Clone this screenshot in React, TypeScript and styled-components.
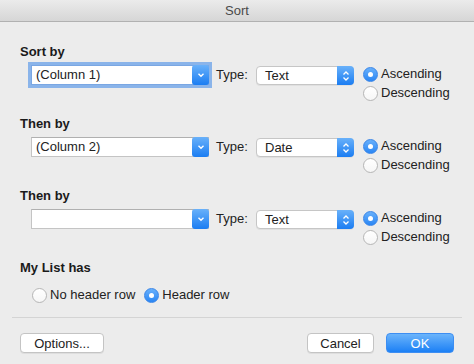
import React from 'react';
import styled, { createGlobalStyle, css } from 'styled-components';

const GlobalStyle = createGlobalStyle`
  html, body {
    margin: 0;
    padding: 0;
    background: #ececec;
  }
  body {
    font-family: 'Liberation Sans', Arial, sans-serif;
    font-size: 13px;
    color: #222;
  }
`;

const Window = styled.div`
  width: 474px;
  height: 364px;
  display: flex;
  flex-direction: column;
  background: #ececec;
  overflow: hidden;
`;

const TitleBar = styled.div`
  height: 21px;
  flex-shrink: 0;
  display: flex;
  align-items: center;
  justify-content: center;
  background: linear-gradient(#ebebeb, #d6d6d6);
  border-bottom: 1px solid #b1b1b1;
  color: #4a4a4a;
  font-size: 13px;
`;

const Body = styled.div`
  display: flex;
  flex-direction: column;
  padding: 22px 0 0 20px;
`;

const Section = styled.div<{ $gap?: number; $after?: number }>`
  display: flex;
  flex-direction: column;
  gap: ${(p) => p.$gap ?? 5}px;
  margin-bottom: ${(p) => p.$after ?? 15}px;
`;

const Heading = styled.div`
  font-weight: bold;
  line-height: 16px;
  height: 16px;
  color: #1a1a1a;
`;

const Row = styled.div`
  display: flex;
  align-items: flex-start;
  padding-left: 11px;
`;

const Combo = styled.div<{ $focused?: boolean }>`
  width: 178px;
  height: 20px;
  display: flex;
  box-sizing: border-box;
  background: #fff;
  border: 1px solid #c4c4c4;
  border-top-color: #b0b0b0;
  ${(p) =>
    p.$focused &&
    css`
      box-shadow: 0 0 0 3px #8ab4ea;
      border-color: #7aa7e3;
    `}
`;

const ComboText = styled.div`
  flex: 1;
  line-height: 18px;
  padding-left: 4px;
`;

const BlueKnob = styled.div<{ $round?: boolean }>`
  width: 17px;
  margin: -1px -1px -1px 0;
  display: flex;
  align-items: center;
  justify-content: center;
  background: linear-gradient(#69b1fa, #1b7df2);
  border-radius: ${(p) => (p.$round ? '0 4px 4px 0' : '3px')};
`;

const TypeLabel = styled.div`
  width: 40px;
  margin-left: 7px;
  line-height: 20px;
`;

const Popup = styled.div`
  width: 98px;
  height: 19px;
  margin-top: 1px;
  box-sizing: border-box;
  display: flex;
  background: #fff;
  border: 1px solid #c6c6c6;
  border-radius: 4px;
  box-shadow: 0 1px 0 rgba(0, 0, 0, 0.05);
`;

const PopupText = styled.div`
  flex: 1;
  line-height: 17px;
  padding-left: 8px;
`;

const RadioColumn = styled.div`
  display: flex;
  flex-direction: column;
  gap: 3px;
  margin: 1px 0 0 9px;
`;

const RadioRow = styled.div`
  display: flex;
  gap: 9px;
  padding-left: 12px;
`;

const RadioItem = styled.label`
  display: flex;
  align-items: center;
  gap: 3px;
  height: 16px;
  line-height: 16px;
`;

const Dot = styled.span<{ $on?: boolean }>`
  width: 15px;
  height: 15px;
  box-sizing: border-box;
  border-radius: 50%;
  display: flex;
  align-items: center;
  justify-content: center;
  ${(p) =>
    p.$on
      ? css`
          background: linear-gradient(#68b0fb, #2a86f4);
          border: 1px solid #3a86e8;
          &::after {
            content: '';
            width: 5px;
            height: 5px;
            border-radius: 50%;
            background: #fff;
          }
        `
      : css`
          background: linear-gradient(#fff, #f6f6f6);
          border: 1px solid #b6b6b6;
        `}
`;

const Divider = styled.div`
  height: 1px;
  background: #d4d4d4;
  margin: 1px 12px 0 -8px;
`;

const Footer = styled.div`
  display: flex;
  justify-content: space-between;
  padding: 15px 20px 0 20px;
`;

const ButtonGroup = styled.div`
  display: flex;
  gap: 12px;
`;

const Button = styled.button<{ $primary?: boolean; $w: number }>`
  width: ${(p) => p.$w}px;
  height: 20px;
  padding: 0;
  font-family: inherit;
  font-size: 13px;
  border-radius: 4px;
  box-sizing: border-box;
  ${(p) =>
    p.$primary
      ? css`
          color: #fff;
          border: 1px solid #3d8ef2;
          background: linear-gradient(#6bb4fb, #1c80f5);
        `
      : css`
          color: #222;
          border: 1px solid #c4c4c4;
          background: #fff;
          box-shadow: 0 1px 0 rgba(0, 0, 0, 0.06);
        `}
`;

function ChevronDown() {
  return (
    <svg width="8" height="6" viewBox="0 0 8 6">
      <path d="M1.5 1.8 L4 4.2 L6.5 1.8" fill="none" stroke="#fff" strokeWidth="1.4" />
    </svg>
  );
}

function UpDown() {
  return (
    <svg width="8" height="12" viewBox="0 0 8 12">
      <path d="M1.5 4.5 L4 2 L6.5 4.5 M1.5 7.5 L4 10 L6.5 7.5" fill="none" stroke="#fff" strokeWidth="1.3" />
    </svg>
  );
}

function Radio({ on, label }: { on?: boolean; label: string }) {
  return (
    <RadioItem>
      <Dot $on={on} />
      {label}
    </RadioItem>
  );
}

interface SortRowProps {
  title: string;
  column: string;
  type: string;
  focused?: boolean;
}

function SortSection({ title, column, type, focused }: SortRowProps) {
  return (
    <Section>
      <Heading>{title}</Heading>
      <Row>
        <Combo $focused={focused}>
          <ComboText>{column}</ComboText>
          <BlueKnob>
            <ChevronDown />
          </BlueKnob>
        </Combo>
        <TypeLabel>Type:</TypeLabel>
        <Popup>
          <PopupText>{type}</PopupText>
          <BlueKnob $round>
            <UpDown />
          </BlueKnob>
        </Popup>
        <RadioColumn>
          <Radio on label="Ascending" />
          <Radio label="Descending" />
        </RadioColumn>
      </Row>
    </Section>
  );
}

export default function App() {
  return (
    <>
      <GlobalStyle />
      <Window>
        <TitleBar>Sort</TitleBar>
        <Body>
          <SortSection title="Sort by" column="(Column 1)" type="Text" focused />
          <SortSection title="Then by" column="(Column 2)" type="Date" />
          <SortSection title="Then by" column="" type="Text" />
          <Section $gap={11} $after={13}>
            <Heading>My List has</Heading>
            <RadioRow>
              <Radio label="No header row" />
              <Radio on label="Header row" />
            </RadioRow>
          </Section>
          <Divider />
        </Body>
        <Footer>
          <Button $w={84}>Options...</Button>
          <ButtonGroup>
            <Button $w={67}>Cancel</Button>
            <Button $w={68} $primary>
              OK
            </Button>
          </ButtonGroup>
        </Footer>
      </Window>
    </>
  );
}
